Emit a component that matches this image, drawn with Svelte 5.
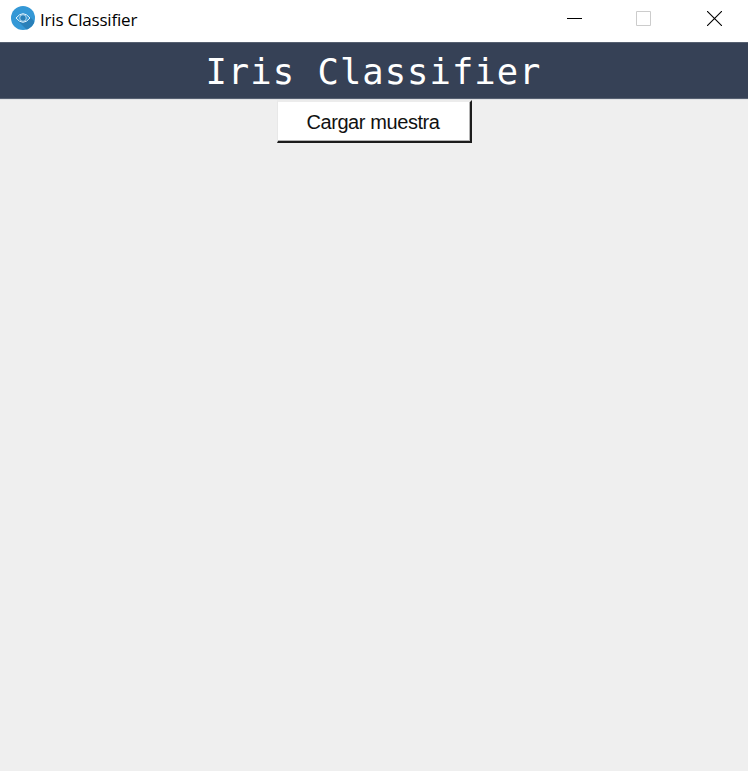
<script>
  const appName = 'Iris Classifier';
</script>

<main class="window">
  <header class="titlebar">
    <svg class="logo" width="24" height="24" viewBox="0 0 24 24" aria-hidden="true">
      <defs><clipPath id="disc"><circle cx="12" cy="12" r="12" /></clipPath></defs>
      <circle cx="12" cy="12" r="12" fill="#3498d6" />
      <path d="M7 15 L18 10 L26 18 L18 26 Z" fill="#2980b9" clip-path="url(#disc)" />
      <path d="M5 12 Q8.5 7.7 12 7.7 T19 12 Q15.5 16.3 12 16.3 T5 12 Z" fill="#3498d6" stroke="#e4f3fc" stroke-width="1" />
      <circle cx="12" cy="12" r="3.3" fill="#2980b9" stroke="#d0e8f7" stroke-width=".8" />
    </svg>
    <span class="name">{appName}</span>
    <nav class="controls">
      <button aria-label="Minimize"><svg width="15" height="15"><path d="M0 7.5H15" stroke="#000" /></svg></button>
      <button aria-label="Maximize" disabled><svg width="15" height="15"><path d="M.5 .5H14.5V14.5H.5Z" fill="none" stroke="#ccc" /></svg></button>
      <button aria-label="Close"><svg width="15" height="15"><path d="M0 0L15 15M15 0L0 15" stroke="#000" stroke-width="1.1" /></svg></button>
    </nav>
  </header>
  <h1>{appName}</h1>
  <section><button class="load">Cargar muestra</button></section>
</main>

<style>
  :global(body) { margin: 0; background: #efefef; }
  .window { height: 771px; background: #efefef; overflow: hidden; }
  .titlebar { display: flex; height: 42px; background: #fff; box-sizing: border-box; padding: 6px 3px 0 11px; }
  .logo { display: block; flex: none; }
  .name { margin-left: 5px; font: 17px/27px "Open Sans", sans-serif; letter-spacing: -.18px; color: #000; white-space: nowrap; }
  .controls { display: flex; margin-left: auto; }
  .controls button { width: 61px; height: 25px; padding: 0; border: 0; background: none; display: flex; align-items: center; justify-content: center; margin-right: 8px; }
  .controls button:nth-child(2) { margin-right: 10px; }
  .controls button:last-child { margin-right: 0; }
  .controls svg { display: block; }
  h1 { box-sizing: border-box; height: 57px; margin: 0; border-top: 1px solid #566071; border-bottom: 1px solid #566071; background: #364156; color: #fff; text-align: center; font: 400 35.5px/58px "DejaVu Sans Mono", monospace; letter-spacing: 1.03px; text-indent: -1px; white-space: nowrap; }
  section { display: flex; justify-content: center; border-top: 1px solid #e1e2e5; }
  .load { box-sizing: border-box; width: 195px; height: 43px; padding: 0 1px 0 0; border-style: solid; border-width: 2px 2px 2px 1px; border-color: #ececec #1c1c1c #1c1c1c #e8e8e8; box-shadow: inset -1px -1px #b4b4b4; background: #fff; color: #111; font: 20px/38px "Liberation Sans", sans-serif; letter-spacing: -.41px; white-space: nowrap; }
</style>
